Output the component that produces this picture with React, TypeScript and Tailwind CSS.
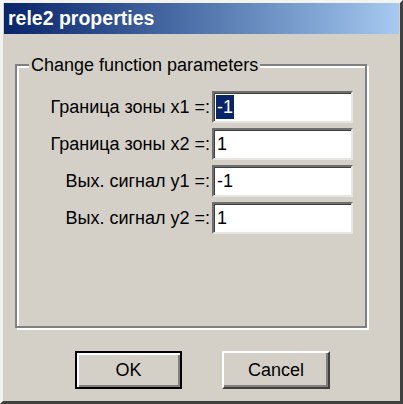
const rows = [
  { label: 'Граница зоны x1 =:', value: '-1', selected: true },
  { label: 'Граница зоны x2 =:', value: '1' },
  { label: 'Вых. сигнал y1 =:', value: '-1' },
  { label: 'Вых. сигнал y2 =:', value: '1' },
];

function Field({ value, selected }: { value: string; selected?: boolean }) {
  return (
    <div className="w-[141px] h-[32px] bg-white border-2 border-t-[#6f6f6f] border-l-[#6f6f6f] border-r-[#e8e6e2] border-b-[#e8e6e2] shadow-[inset_1px_1px_0_#404040] flex items-center pl-[2px]">
      {selected ? (
        <span className="bg-[#0a246a] text-white px-[1px] leading-[24px]">{value}</span>
      ) : (
        <span className="px-[1px]">{value}</span>
      )}
    </div>
  );
}

export default function App() {
  return (
    <div className="w-[403px] h-[404px] bg-[#d4d0c8] border-[3px] border-t-[#f4f3f0] border-l-[#f4f3f0] border-r-[#404040] border-b-[#404040] flex flex-col text-[18px] text-black font-['Liberation_Sans',_'DejaVu_Sans',_sans-serif]">
      {/* Title bar */}
      <div className="mx-px h-[31px] bg-gradient-to-r from-[#0a246a] to-[#a6caf0] flex items-center pl-[4px]">
        <span className="text-white font-bold text-[19.5px]">rele2 properties</span>
      </div>

      {/* Group box */}
      <fieldset className="ml-[12px] mt-[20px] w-[352px] h-[274px] border-2 border-[#808080] shadow-[inset_2px_2px_0_#fff,2px_2px_0_#fff] px-0 pt-[15px]">
        <legend className="ml-[12px] px-[2px] bg-[#d4d0c8] leading-[22px]">Change function parameters</legend>
        <div className="flex flex-col gap-[5px]">
          {rows.map((r) => (
            <div key={r.label} className="flex items-center gap-[2px]">
              <div className="w-[193px] text-right whitespace-nowrap">{r.label}</div>
              <Field value={r.value} selected={r.selected} />
            </div>
          ))}
        </div>
      </fieldset>

      {/* Buttons */}
      <div className="mt-[23px] flex justify-center gap-[40px] pl-[2px]">
        <button className="w-[107px] h-[38px] border-2 border-black bg-[#d4d0c8] shadow-[inset_2px_2px_0_#fff,inset_-2px_-2px_0_#808080]">
          OK
        </button>
        <button className="w-[108px] h-[38px] border-2 border-t-white border-l-white border-r-[#404040] border-b-[#404040] bg-[#d4d0c8] shadow-[inset_-2px_-2px_0_#808080]">
          Cancel
        </button>
      </div>
    </div>
  );
}
